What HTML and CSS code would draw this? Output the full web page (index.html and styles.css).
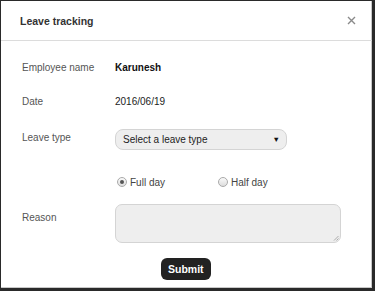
FILE: index.html
```html
<!DOCTYPE html>
<html>
  <head>
    <meta charset="UTF-8" />
    <meta name="viewport" content="width=device-width, initial-scale=1.0" />
    <title>Leave tracking</title>
    <link rel="stylesheet" href="styles.css">
  </head>
  <body>
    <div class="modal">
      <div class="modal-header">
        <div class="modal-title">Leave tracking</div>
        <button class="close" type="button" aria-label="Close">
          <svg width="9" height="9" viewBox="0 0 9 9">
            <path d="M1 1 L8 8 M8 1 L1 8" stroke="#8a8a8a" stroke-width="1.4" />
          </svg>
        </button>
      </div>
      <form class="modal-body">
        <div class="row row-name">
          <div class="label">Employee name</div>
          <div class="value strong">Karunesh</div>
        </div>
        <div class="row row-date">
          <div class="label">Date</div>
          <div class="value">2016/06/19</div>
        </div>
        <div class="row row-type">
          <div class="label">Leave type</div>
          <div class="select">
            <span>Select a leave type</span>
            <span class="caret">&#9660;</span>
          </div>
        </div>
        <div class="row row-radio">
          <div class="label"></div>
          <label class="radio radio-full">
            <span class="dot checked"></span>Full day
          </label>
          <label class="radio">
            <span class="dot"></span>Half day
          </label>
        </div>
        <div class="row row-reason">
          <div class="label label-top">Reason</div>
          <div class="textarea">
            <svg class="grip" width="6" height="6" viewBox="0 0 6 6">
              <path d="M5.5 1 L1 5.5 M5.5 3.5 L3.5 5.5" stroke="#999" stroke-width="0.8" />
            </svg>
          </div>
        </div>
        <div class="actions">
          <button class="btn" type="button">Submit</button>
        </div>
      </form>
    </div>
  </body>
</html>
```

FILE: styles.css
```css
body {
  margin: 0;
  background-color: #fff;
  font-family: "Liberation Sans", Arial, sans-serif;
  font-size: 10px;
  color: #444;
}
.modal {
  box-sizing: border-box;
  width: 375px;
  height: 291px;
  border: 1px solid #2a2a2a;
  border-right-width: 3px;
  border-bottom-width: 3px;
  box-shadow: inset -1px -1px 0 #c8c8c8;
  background-color: #fff;
}
.modal-header {
  display: flex;
  align-items: center;
  justify-content: space-between;
  height: 39px;
  padding: 0 16px 0 19px;
  border-bottom: 1px solid #dcdcdc;
}
.modal-title {
  font-size: 10.5px;
  font-weight: bold;
  color: #333;
}
.close {
  border: 0;
  background: none;
  padding: 0;
  display: flex;
}
.modal-body {
  padding: 16px 0 0 21px;
  margin: 0;
}
.row {
  display: flex;
  align-items: center;
  height: 20px;
}
.label {
  width: 93px;
  flex-shrink: 0;
  color: #555;
}
.value {
  color: #222;
}
.strong {
  font-weight: bold;
  color: #111;
}
.row-date {
  margin-top: 14px;
}
.row-type {
  margin-top: 17px;
  height: 22px;
}
.row-type .label {
  margin-top: -3px;
}
.select {
  box-sizing: border-box;
  width: 172px;
  height: 21px;
  display: flex;
  align-items: center;
  justify-content: space-between;
  padding: 0 6px 0 7px;
  border: 1px solid #d4d4d4;
  border-radius: 8px;
  background-color: #eee;
  color: #222;
}
.caret {
  font-size: 7.5px;
  color: #111;
}
.row-radio {
  margin-top: 24px;
  height: 16px;
}
.radio {
  display: flex;
  align-items: center;
  gap: 3px;
  color: #444;
}
.radio-full {
  width: 101px;
  padding-left: 2px;
}
.dot {
  box-sizing: border-box;
  width: 10px;
  height: 10px;
  border-radius: 50%;
  border: 1px solid #aaa;
  background: linear-gradient(#fafafa, #ddd);
  position: relative;
}
.dot.checked::after {
  content: "";
  position: absolute;
  left: 2px;
  top: 2px;
  width: 4px;
  height: 4px;
  border-radius: 50%;
  background-color: #555;
}
.row-reason {
  margin-top: 14px;
  height: auto;
  align-items: flex-start;
}
.label-top {
  padding-top: 8px;
}
.textarea {
  box-sizing: border-box;
  width: 226px;
  height: 39px;
  border: 1px solid #d4d4d4;
  border-radius: 7px;
  background-color: #eee;
  position: relative;
}
.grip {
  position: absolute;
  right: 1px;
  bottom: 1px;
}
.actions {
  display: flex;
  padding-left: 139px;
  margin-top: 15px;
}
.btn {
  height: 22px;
  padding: 0 7px;
  border: 0;
  border-radius: 6px;
  background-color: #222;
  color: #fff;
  font-family: "Liberation Sans", Arial, sans-serif;
  font-size: 10.5px;
  font-weight: bold;
}
```
